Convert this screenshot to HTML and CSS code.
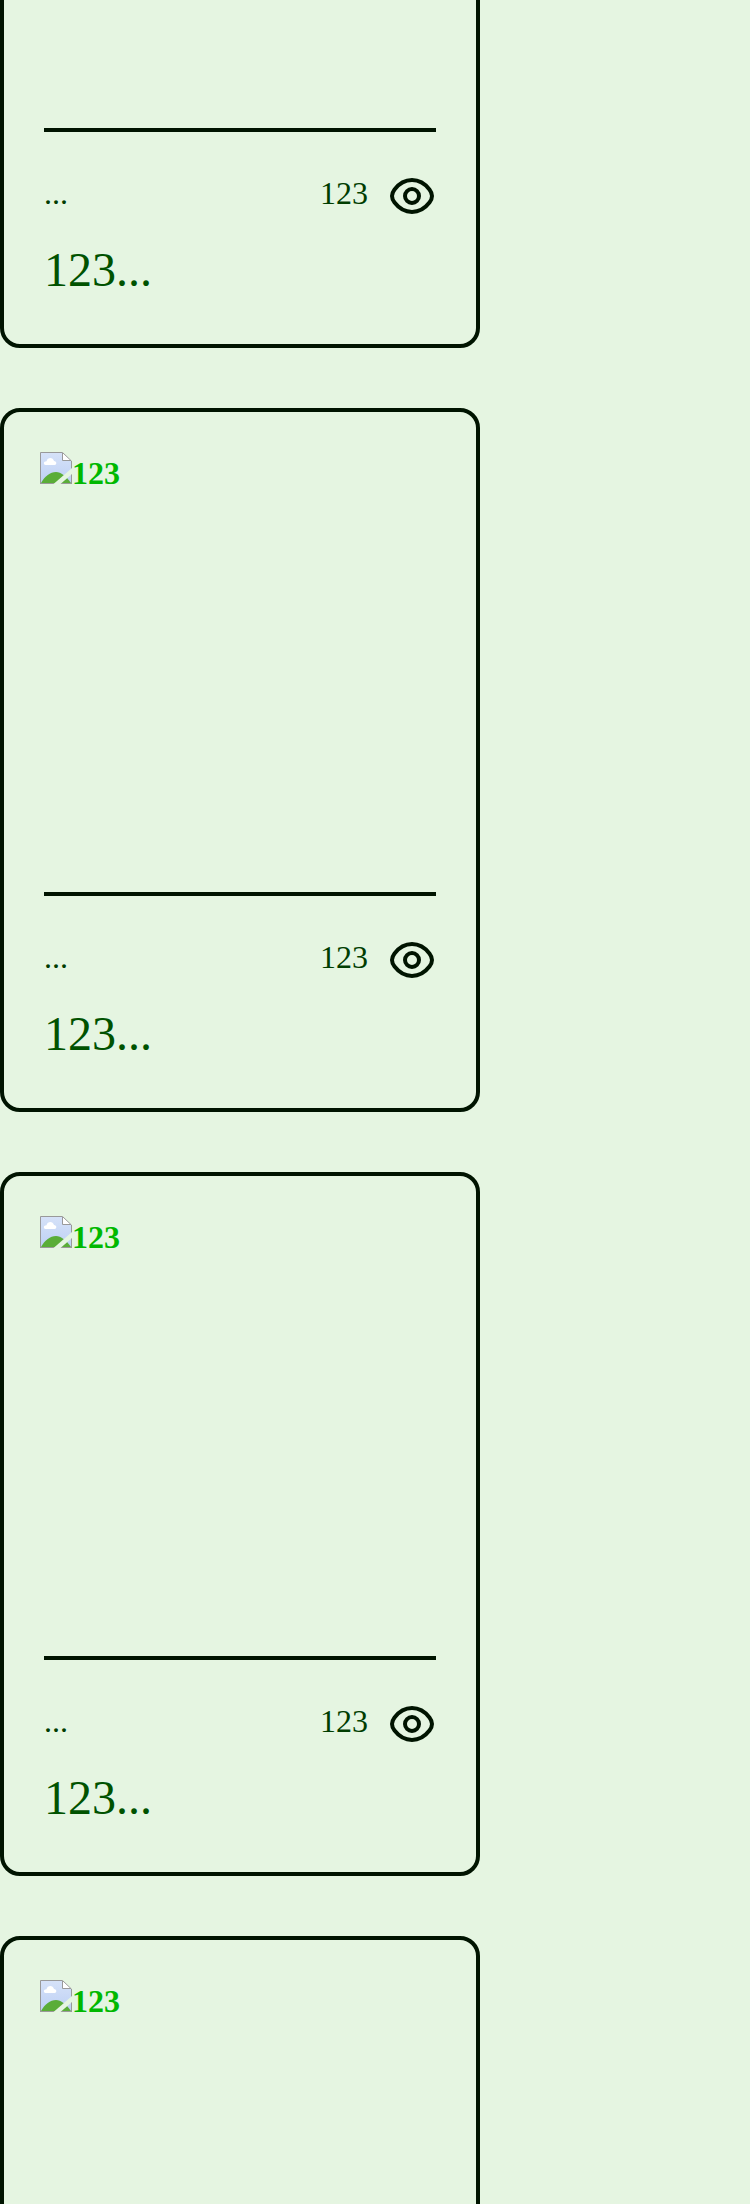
FILE: index.html
```html
<!DOCTYPE html>
<html lang="en">
<head>
<meta charset="utf-8">
<title>Cards</title>
<link rel="stylesheet" href="styles.css">
</head>
<body>
<svg width="0" height="0" class="defs">
  <defs>
    <linearGradient id="sky" x1="0" y1="0" x2="0" y2="1">
      <stop offset="0" stop-color="#d6e2f8"/>
      <stop offset="1" stop-color="#bdd0f5"/>
    </linearGradient>
  </defs>
  <symbol id="eye" viewBox="0 0 24 24">
    <g fill="none" stroke="currentColor" stroke-width="2">
      <path d="M3.275 15.296C2.425 14.192 2 13.639 2 12c0-1.639.425-2.191 1.275-3.296C4.972 6.5 7.818 4 12 4s7.028 2.5 8.725 4.704C21.575 9.809 22 10.361 22 12c0 1.639-.425 2.192-1.275 3.296C19.028 17.5 16.182 20 12 20s-7.028-2.5-8.725-4.704Z"/>
      <circle cx="12" cy="12" r="3.5"/>
    </g>
  </symbol>
  <symbol id="picture" viewBox="0 0 32 32">
    <path d="M.5.5H22.5L31.5 9.5V31.5H.5Z" fill="url(#sky)"/>
    <path d="M1 31C5 24 10 20 16 20c5 0 10 4 15 11Z" fill="#5aad38"/>
    <path d="M5.500 13C3 12.500 3.500 9 6.500 9.200C7.500 5 13 4.800 14 9c3 .2 3 4 .5 4Z" fill="#fff"/>
    <path d="M22.500.5V8.500H31.500Z" fill="#fff"/>
    <path d="M22.500 1V8.500H31M.5 32V.5H22.500L31.500 9V32M0 31.500H32" fill="none" stroke="#999"/>
    <path d="M13.500 32L32 16V22L20.500 32Z" fill="#e5f5e1"/>
  </symbol>
</svg>
<main class="list">
  <article class="card">
    <div class="cover"></div>
    <div class="info">
      <div class="meta"><span>...</span><span class="views">123<svg class="eye"><use href="#eye"/></svg></span></div>
      <div class="title">123...</div>
    </div>
  </article>
  <article class="card">
    <div class="cover"><svg class="picture"><use href="#picture"/></svg><b>123</b></div>
    <div class="info">
      <div class="meta"><span>...</span><span class="views">123<svg class="eye"><use href="#eye"/></svg></span></div>
      <div class="title">123...</div>
    </div>
  </article>
  <article class="card">
    <div class="cover"><svg class="picture"><use href="#picture"/></svg><b>123</b></div>
    <div class="info">
      <div class="meta"><span>...</span><span class="views">123<svg class="eye"><use href="#eye"/></svg></span></div>
      <div class="title">123...</div>
    </div>
  </article>
  <article class="card">
    <div class="cover"><svg class="picture"><use href="#picture"/></svg><b>123</b></div>
  </article>
</main>
</body>
</html>
```
FILE: styles.css
```css
* { box-sizing: border-box; }
body {
  margin: 0;
  background: #e5f5e1;
  font-family: "Liberation Serif", "Times New Roman", serif;
  font-size: 32px;
}
.defs { display: block; }
.list {
  display: flex;
  flex-direction: column;
  gap: 60px;
  height: 2204px;
  overflow: hidden;
}
.card {
  flex: none;
  width: 480px;
  height: 704px;
  padding: 40px 40px 0;
  border: 4px solid #001400;
  border-radius: 20px;
}
.card:first-child { margin-top: -356px; }
.cover {
  display: flex;
  height: 440px;
  margin-left: -4px;
  line-height: 36px;
  color: #00b800;
}
.cover b { padding-top: 3px; }
.picture { display: block; width: 32px; height: 32px; }
.info {
  border-top: 4px solid #001400;
  padding-top: 40px;
}
.meta {
  display: flex;
  justify-content: space-between;
  height: 48px;
  line-height: 42px;
  color: #003d00;
}
.views { display: flex; gap: 20px; }
.eye { display: block; width: 48px; height: 48px; color: #001400; }
.title {
  margin-top: 22px;
  font-size: 48px;
  line-height: 55px;
  color: #005200;
}
```
